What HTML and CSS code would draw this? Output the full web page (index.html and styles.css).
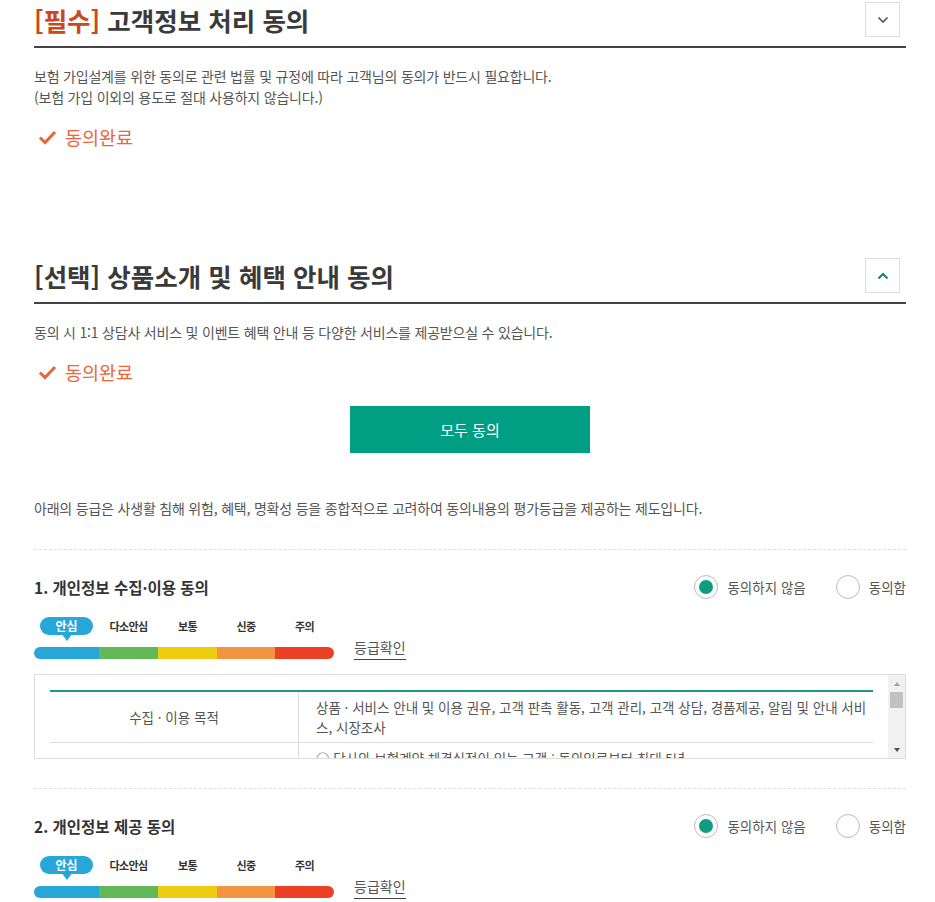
FILE: index.html
```html
<!DOCTYPE html>
<html lang="ko">
<head>
  <meta charset="UTF-8" />
  <meta name="viewport" content="width=device-width, initial-scale=1.0" />
  <title>고객정보 동의</title>
  <link rel="stylesheet" href="styles.css">
</head>
<body>
  <div class="page">

    <section class="agree">
      <div class="agree-head">
        <h2><em>[필수]</em> 고객정보 처리 동의</h2>
        <button class="fold" type="button" aria-label="펼치기">
          <svg width="12" height="8" viewBox="0 0 12 8"><polyline points="1.5,1.5 6,6 10.5,1.5" fill="none" stroke="#555" stroke-width="1.6"/></svg>
        </button>
      </div>
      <p class="desc">보험 가입설계를 위한 동의로 관련 법률 및 규정에 따라 고객님의 동의가 반드시 필요합니다.<br>(보험 가입 이외의 용도로 절대 사용하지 않습니다.)</p>
      <p class="done">
        <svg width="19" height="15" viewBox="0 0 19 15"><polyline points="2,7.5 7,12.5 17,2" fill="none" stroke="#e8663a" stroke-width="3"/></svg>
        동의완료
      </p>
    </section>

    <section class="agree agree-opt">
      <div class="agree-head">
        <h2>[선택] 상품소개 및 혜택 안내 동의</h2>
        <button class="fold" type="button" aria-label="접기">
          <svg width="12" height="8" viewBox="0 0 12 8"><polyline points="1.5,6.5 6,2 10.5,6.5" fill="none" stroke="#1f7d72" stroke-width="2"/></svg>
        </button>
      </div>
      <p class="desc">동의 시 1:1 상담사 서비스 및 이벤트 혜택 안내 등 다양한 서비스를 제공받으실 수 있습니다.</p>
      <p class="done">
        <svg width="19" height="15" viewBox="0 0 19 15"><polyline points="2,7.5 7,12.5 17,2" fill="none" stroke="#e8663a" stroke-width="3"/></svg>
        동의완료
      </p>

      <div class="all-wrap">
        <button class="all-btn" type="button">모두 동의</button>
      </div>

      <p class="desc notice">아래의 등급은 사생활 침해 위험, 혜택, 명확성 등을 종합적으로 고려하여 동의내용의 평가등급을 제공하는 제도입니다.</p>

      <div class="item">
        <div class="item-head">
          <h3>1. 개인정보 수집·이용 동의</h3>
          <div class="radios">
            <label class="radio on"><span class="dot"></span>동의하지 않음</label>
            <label class="radio"><span class="dot"></span>동의함</label>
          </div>
        </div>
        <div class="grade-row">
          <div class="grade">
            <ul class="grade-labels">
              <li class="cur"><span>안심</span></li>
              <li>다소안심</li>
              <li>보통</li>
              <li>신중</li>
              <li>주의</li>
            </ul>
            <div class="grade-bar">
              <i class="g1"></i><i class="g2"></i><i class="g3"></i><i class="g4"></i><i class="g5"></i>
            </div>
          </div>
          <a class="grade-link" href="#">등급확인</a>
        </div>
        <div class="terms">
          <div class="terms-body">
            <table>
              <tr>
                <th>수집 · 이용 목적</th>
                <td>상품 · 서비스 안내 및 이용 권유, 고객 판촉 활동, 고객 관리, 고객 상담, 경품제공, 알림 및 안내 서비스, 시장조사</td>
              </tr>
              <tr>
                <th>보유 · 이용 기간</th>
                <td>○ 당사와 보험계약 체결실적이 있는 고객 : 동의일로부터 최대 5년<br>○ 당사와 보험계약 체결실적이 없는 고객 : 동의일로부터 최대 1년<br>※ 위 보유기간 경과 시 또는 동의 철회 시 지체 없이 파기합니다.</td>
              </tr>
              <tr>
                <th>수집 · 이용 항목</th>
                <td>개인(신용)정보 : 성명, 생년월일, 성별, 휴대전화번호, 이메일 주소, 주소</td>
              </tr>
            </table>
          </div>
          <div class="vscroll">
            <span class="arrow up"></span>
            <span class="track"><span class="thumb"></span></span>
            <span class="arrow down"></span>
          </div>
        </div>
      </div>

      <div class="item">
        <div class="item-head">
          <h3>2. 개인정보 제공 동의</h3>
          <div class="radios">
            <label class="radio on"><span class="dot"></span>동의하지 않음</label>
            <label class="radio"><span class="dot"></span>동의함</label>
          </div>
        </div>
        <div class="grade-row">
          <div class="grade">
            <ul class="grade-labels">
              <li class="cur"><span>안심</span></li>
              <li>다소안심</li>
              <li>보통</li>
              <li>신중</li>
              <li>주의</li>
            </ul>
            <div class="grade-bar">
              <i class="g1"></i><i class="g2"></i><i class="g3"></i><i class="g4"></i><i class="g5"></i>
            </div>
          </div>
          <a class="grade-link" href="#">등급확인</a>
        </div>
      </div>
    </section>

  </div>
</body>
</html>
```

FILE: styles.css
```css
:root {
  --teal: #009f84;
  --orange: #e8663a;
  --text: #333;
  --sub: #555;
  --line: #ddd;
}

body {
  margin: 0;
  font-family: "Noto Sans CJK KR", "Noto Sans", sans-serif;
  color: var(--text);
  background: #fff;
}

.page {
  padding: 0 29px 40px 34px;
}

/* 동의 섹션 */
.agree-head {
  display: flex;
  justify-content: space-between;
  align-items: center;
  padding: 2px 6px 9px 0;
  border-bottom: 2px solid #444;
}

.agree-head h2 {
  margin: 0;
  font-size: 25.5px;
  line-height: 35px;
  font-weight: bold;
  color: #3a3a3a;
}

.agree-head h2 em {
  font-style: normal;
  color: #c9481c;
}

.fold {
  width: 35px;
  height: 35px;
  padding: 0;
  border: 1px solid var(--line);
  background: #fff;
  display: flex;
  align-items: center;
  justify-content: center;
}

.desc {
  margin: 18px 0 0;
  font-size: 14px;
  line-height: 21px;
  color: var(--sub);
  letter-spacing: -0.2px;
}

.done {
  margin: 17px 0 0;
  display: flex;
  align-items: center;
  gap: 8px;
  padding-left: 4px;
  font-size: 18.5px;
  line-height: 24px;
  color: var(--orange);
}

.agree-opt {
  margin-top: 107px;
}

.all-wrap {
  margin-top: 22px;
  display: flex;
  justify-content: center;
}

.all-btn {
  width: 240px;
  height: 47px;
  border: none;
  background: var(--teal);
  color: #fff;
  font-family: inherit;
  font-size: 15px;
}

.notice {
  margin-top: 45px;
}

/* 개별 항목 */
.item {
  margin-top: 30px;
  border-top: 1px dashed var(--line);
  padding-top: 25px;
}

.item + .item {
  margin-top: 29px;
}

.item-head {
  display: flex;
  justify-content: space-between;
  align-items: center;
}

.item-head h3 {
  margin: 0;
  font-size: 15.5px;
  line-height: 22px;
  font-weight: bold;
  color: #333;
}

.radios {
  display: flex;
  gap: 30px;
}

.radio {
  display: flex;
  align-items: center;
  gap: 9px;
  font-size: 13.5px;
  line-height: 24px;
  color: var(--sub);
}

.radio .dot {
  width: 22px;
  height: 22px;
  border: 1px solid #bbb;
  border-radius: 50%;
  display: flex;
  align-items: center;
  justify-content: center;
}

.radio.on .dot::after {
  content: "";
  width: 14px;
  height: 14px;
  border-radius: 50%;
  background: #0f9c80;
}

/* 평가등급 */
.grade-row {
  margin-top: 18px;
  display: flex;
  align-items: flex-end;
  gap: 20px;
}

.grade {
  width: 300px;
}

.grade-labels,
.grade-bar {
  display: grid;
  grid-template-columns: 65px 59px 59px 58px 59px;
}

.grade-labels {
  margin: 0;
  padding: 0;
  list-style: none;
  height: 30px;
}

.grade-labels li {
  text-align: center;
  font-size: 11px;
  line-height: 18px;
  font-weight: bold;
  color: #333;
  letter-spacing: -0.6px;
}

.grade-labels li.cur span {
  position: relative;
  display: block;
  width: 53px;
  height: 18px;
  margin: 0 auto;
  border-radius: 9px;
  background: #27a6d8;
  color: #fff;
  font-size: 12px;
  letter-spacing: 0;
}

.grade-labels li.cur span::after {
  content: "";
  position: absolute;
  left: 50%;
  top: 16px;
  margin-left: -6px;
  border: 6px solid transparent;
  border-top: 8px solid #27a6d8;
  border-bottom: 0;
}

.grade-bar {
  height: 12px;
  border-radius: 6px;
  overflow: hidden;
}

.g1 { background: #27a6d8; }
.g2 { background: #63b958; }
.g3 { background: #eecc12; }
.g4 { background: #f39441; }
.g5 { background: #ec4025; }

.grade-link {
  margin-bottom: -1px;
  font-size: 14px;
  line-height: 20px;
  padding-bottom: 2px;
  border-bottom: 1px solid #444;
  color: var(--sub);
  text-decoration: none;
}

/* 약관 표 */
.terms {
  margin-top: 15px;
  height: 85px;
  box-sizing: border-box;
  border: 1px solid var(--line);
  display: flex;
}

.terms-body {
  flex: 1;
  overflow: hidden;
  padding: 15px 15px 0;
}

.terms table {
  width: 100%;
  border-collapse: collapse;
  border-top: 2px solid #1a9a84;
  font-size: 13.5px;
  line-height: 20px;
  color: var(--sub);
}

.terms th {
  width: 246px;
  font-weight: normal;
  border-right: 1px solid var(--line);
  border-bottom: 1px solid var(--line);
}

.terms td {
  padding: 5px 2px 5px 17px;
  border-bottom: 1px solid var(--line);
}

/* 스크롤바 */
.vscroll {
  width: 17px;
  background: #f1f1f1;
  display: flex;
  flex-direction: column;
}

.arrow {
  height: 17px;
  display: flex;
  align-items: center;
  justify-content: center;
}

.arrow::before {
  content: "";
  border-left: 3.5px solid transparent;
  border-right: 3.5px solid transparent;
}

.arrow.up::before {
  border-bottom: 4px solid #a3a3a3;
}

.arrow.down::before {
  border-top: 4px solid #505050;
}

.track {
  flex: 1;
  padding: 0 2px;
}

.thumb {
  display: block;
  height: 16px;
  background: #c1c1c1;
}
```
